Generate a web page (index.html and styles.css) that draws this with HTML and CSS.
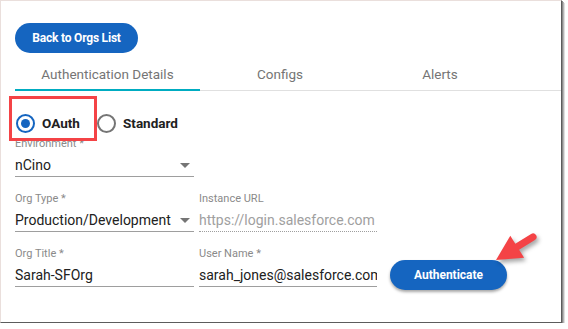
FILE: index.html
```html
<!DOCTYPE html>
<html lang="en">
<head>
    <meta charset="UTF-8">
    <title>Org Authentication</title>
    <link rel="stylesheet" href="styles.css">
</head>
<body>

<div class="panel">
    <button class="btn btn-back">Back to Orgs List</button>

    <!-- tabs -->
    <div class="tabs">
        <div class="tab tab-auth active">Authentication Details</div>
        <div class="tab tab-configs">Configs</div>
        <div class="tab tab-alerts">Alerts</div>
    </div>

    <!-- auth type -->
    <div class="radio-row">
        <div class="radio-option highlight">
            <span class="radio checked"></span>
            <span class="radio-label">OAuth</span>
        </div>
        <div class="radio-option">
            <span class="radio"></span>
            <span class="radio-label">Standard</span>
        </div>
    </div>

    <div class="field-row first">
        <div class="field col1">
            <div class="label clipped"><span>Environment *</span></div>
            <div class="value select">nCino<span class="caret"></span></div>
        </div>
    </div>

    <div class="field-row">
        <div class="field col1">
            <div class="label">Org Type *</div>
            <div class="value select">Production/Development<span class="caret"></span></div>
        </div>
        <div class="field col2">
            <div class="label">Instance URL</div>
            <div class="value disabled">https://login.salesforce.com</div>
        </div>
    </div>

    <div class="field-row">
        <div class="field col1">
            <div class="label">Org Title *</div>
            <div class="value">Sarah-SFOrg</div>
        </div>
        <div class="field col2">
            <div class="label">User Name *</div>
            <div class="value">sarah_jones@salesforce.com</div>
        </div>
        <button class="btn btn-auth">Authenticate</button>
    </div>

    <!-- callout arrow -->
    <svg class="arrow" width="60" height="45" viewBox="0 0 60 45">
        <path d="M15 34 L29.3 9.8 L34.3 17.8 L50.1 8 A3.5 3.5 0 0 1 53.9 14 L38.1 23.8 L43.1 31.8 Z" fill="#f44346"/>
    </svg>
</div>

</body>
</html>
```

FILE: styles.css
```css
body, html {
    margin: 0;
    padding: 0;
    background: #fff;
}

body {
    font-family: Roboto, "Liberation Sans", Arial, sans-serif;
    color: #212121;
}

.panel {
    position: relative;
    box-sizing: border-box;
    width: 562px;
    height: 323px;
    padding: 22px 0 0 14px;
    background: #fff;
    border-top: 1px solid #eadfdc;
    border-left: 1px solid #eadfdc;
    border-right: 1px solid #5c5c5c;
    border-bottom: 1px solid #5c5c5c;
    box-shadow: 1px 1px 0 #8a8a8a, 2px 2px 0 #b5b5b5, 3px 3px 0 #e0e0e0;
}

.btn {
    border: none;
    border-radius: 15px;
    background-color: #1565c0;
    color: #fff;
    font-family: Roboto, "Liberation Sans", Arial, sans-serif;
    font-weight: bold;
    font-size: 12px;
    height: 30px;
    padding: 0;
    cursor: pointer;
}

.btn-back {
    display: block;
    width: 123px;
    letter-spacing: -0.2px;
}

.btn-auth {
    width: 117px;
    margin: 13px 0 0 13px;
    box-shadow: 0 2px 3px rgba(0, 0, 0, 0.35);
}

/* tabs */
.tabs {
    display: flex;
    margin-top: 5px;
    border-bottom: 1px solid #e0e0e0;
}

.tab {
    height: 31px;
    line-height: 33px;
    margin-bottom: -1px;
    border-bottom: 2px solid transparent;
    text-align: center;
    font-size: 13.5px;
    color: #757575;
}

.tab-auth { width: 185px; }
.tab-configs { width: 160px; }
.tab-alerts { width: 160px; }

.tab.active {
    border-bottom-color: #00acc1;
}

/* radio buttons */
.radio-row {
    display: flex;
    margin-top: 5px;
    margin-left: -6px;
    height: 45px;
}

.radio-option {
    display: flex;
    align-items: center;
    height: 100%;
    padding-top: 9px;
    box-sizing: border-box;
}

.radio-option.highlight {
    width: 88px;
    padding-left: 4px;
    border: 3px solid #f44346;
}

.radio {
    box-sizing: border-box;
    width: 19px;
    height: 19px;
    border: 2px solid #757575;
    border-radius: 50%;
    position: relative;
}

.radio.checked {
    border-color: #1565c0;
}

.radio.checked::after {
    content: "";
    position: absolute;
    left: 3px;
    top: 3px;
    width: 9px;
    height: 9px;
    border-radius: 50%;
    background: #1565c0;
}

.radio-label {
    margin-left: 7px;
    font-size: 13.5px;
    font-weight: bold;
    color: #212121;
}

.radio-option + .radio-option {
    margin-left: 0;
}

/* form fields */
.field-row {
    display: flex;
    align-items: flex-start;
    margin-top: 15px;
}

.field-row.first {
    margin-top: 0;
}

.field {
    box-sizing: border-box;
}

.col1 { width: 179px; }
.col2 { width: 178px; margin-left: 5px; }

.label {
    font-size: 11px;
    line-height: 13px;
    color: #8a8a8a;
    white-space: nowrap;
}

.label.clipped {
    height: 9px;
    overflow: hidden;
    display: flex;
    align-items: flex-end;
}

.value {
    position: relative;
    box-sizing: border-box;
    height: 27px;
    padding-top: 5px;
    line-height: 20px;
    font-size: 14px;
    color: #212121;
    border-bottom: 1px solid #9e9e9e;
    white-space: nowrap;
    overflow: hidden;
}

.value.disabled {
    color: #a0a0a0;
    border-bottom: 1px dotted #9e9e9e;
}

.caret {
    position: absolute;
    right: 4px;
    top: 13px;
    width: 0;
    height: 0;
    border-left: 5px solid transparent;
    border-right: 5px solid transparent;
    border-top: 5px solid #757575;
}

.arrow {
    position: absolute;
    left: 480px;
    top: 225px;
    filter: drop-shadow(2px 3px 2px rgba(0, 0, 0, 0.35));
}
```
